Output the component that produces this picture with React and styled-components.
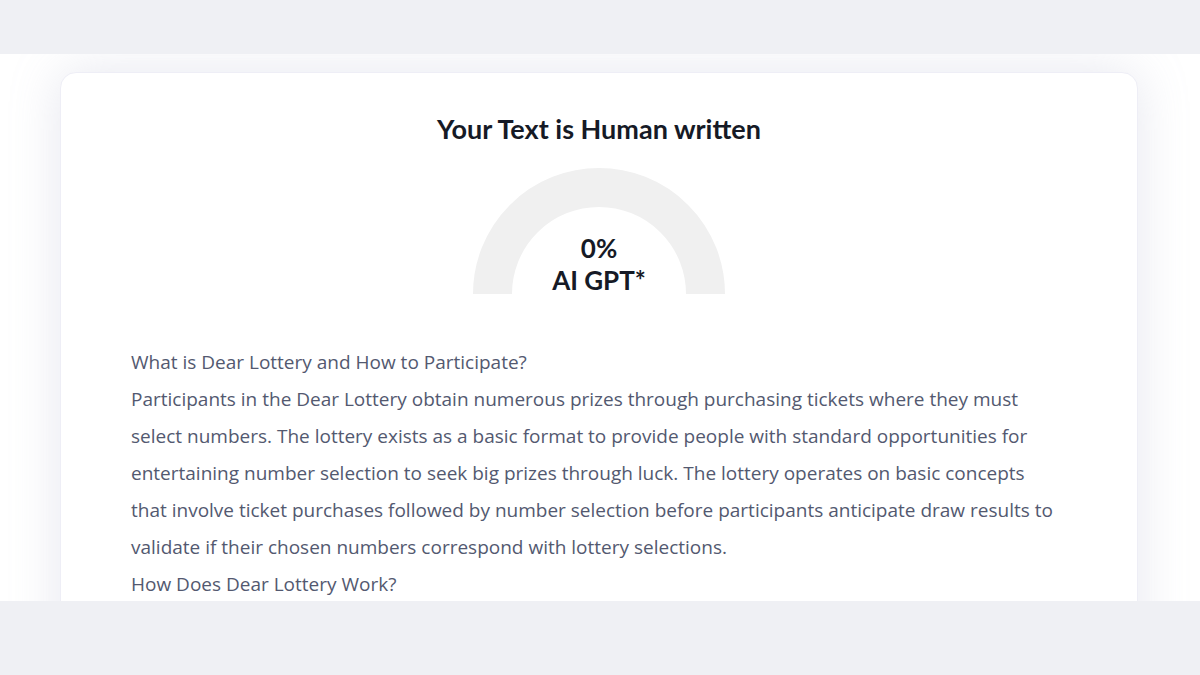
import React from 'react';
import styled, { createGlobalStyle } from 'styled-components';

const GlobalStyle = createGlobalStyle`
  html, body {
    margin: 0;
    padding: 0;
    background: #eff0f4;
  }
  body {
    font-family: "Open Sans", "Liberation Sans", sans-serif;
  }
`;

const Band = styled.div`
  height: ${p => p.$h}px;
  background: #eff0f4;
`;

const Stage = styled.section`
  height: 547px;
  background: #ffffff;
  overflow: hidden;
  padding: 18px 62px 0 60px;
  box-sizing: border-box;
`;

const Card = styled.div`
  background: #ffffff;
  border-radius: 16px;
  border: 1px solid #eeeef6;
  box-shadow: 0 0 50px rgba(165, 168, 198, 0.28);
  padding: 40px 70px 40px 70px;
  min-height: 700px;
  box-sizing: border-box;
`;

const Heading = styled.h2`
  margin: 0;
  text-align: center;
  font-family: Lato, "Open Sans", sans-serif;
  font-weight: 700;
  font-size: 27px;
  line-height: 32px;
  color: #161a26;
`;

const GaugeWrap = styled.div`
  position: relative;
  width: 252px;
  height: 126px;
  margin: 23px auto 0;
`;

const GaugeLabel = styled.div`
  position: absolute;
  left: 0;
  right: 0;
  bottom: -2px;
  text-align: center;
  font-family: Lato, "Open Sans", sans-serif;
  font-weight: 700;
  font-size: 26px;
  line-height: 32px;
  color: #161a26;
`;

const Body = styled.div`
  margin-top: 50px;
  max-width: 928px;
  font-size: 19px;
  line-height: 37px;
  color: #535970;
`;

const Line = styled.p`
  margin: 0;
`;

const Gauge = ({ value }) => {
  const r = 106.5;
  const cx = 126;
  const cy = 126;
  return (
    <GaugeWrap>
      <svg width="252" height="126" viewBox="0 0 252 126">
        <path
          d={`M ${cx - r} ${cy} A ${r} ${r} 0 0 1 ${cx + r} ${cy}`}
          fill="none"
          stroke="#f0f0f0"
          strokeWidth="39"
        />
      </svg>
      <GaugeLabel>
        {value}%<br />
        AI GPT*
      </GaugeLabel>
    </GaugeWrap>
  );
};

export default function App() {
  return (
    <>
      <GlobalStyle />
      <Band $h={54} />
      <Stage>
        <Card>
          <Heading>Your Text is Human written</Heading>
          <Gauge value={0} />
          <Body>
            <Line>What is Dear Lottery and How to Participate?</Line>
            <Line>
              Participants in the Dear Lottery obtain numerous prizes through purchasing tickets where they must
              select numbers. The lottery exists as a basic format to provide people with standard opportunities for
              entertaining number selection to seek big prizes through luck. The lottery operates on basic concepts
              that involve ticket purchases followed by number selection before participants anticipate draw results to
              validate if their chosen numbers correspond with lottery selections.
            </Line>
            <Line>How Does Dear Lottery Work?</Line>
          </Body>
        </Card>
      </Stage>
      <Band $h={74} />
    </>
  );
}
